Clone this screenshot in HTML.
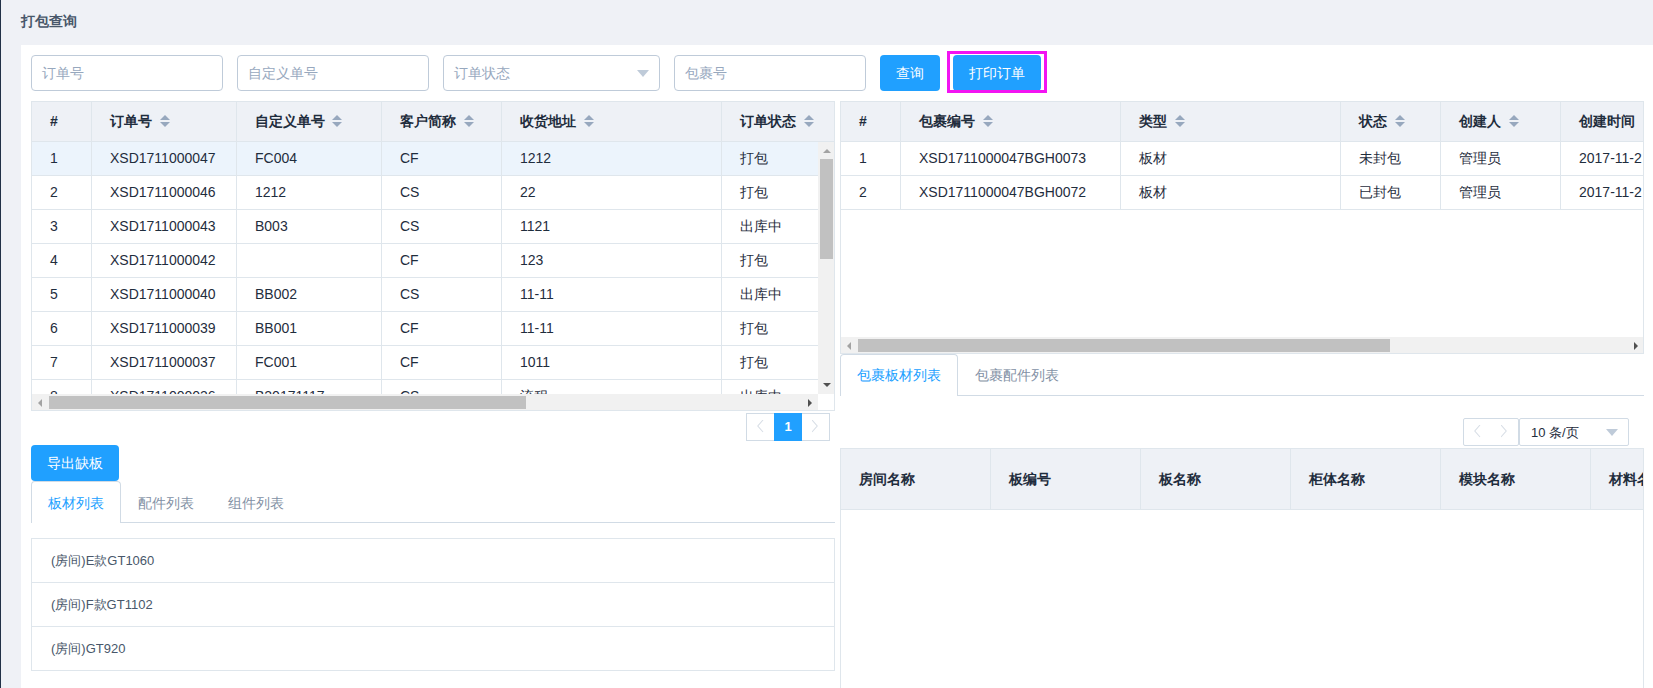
<!DOCTYPE html><html><head><meta charset="utf-8"><style>
*{box-sizing:border-box}
html,body{margin:0;padding:0}
body{width:1653px;height:688px;overflow:hidden;position:relative;background:#eff1f6;font-family:"Liberation Sans",sans-serif;font-size:14px;color:#1f2d3d}
.a{position:absolute}
.hl{position:absolute;height:1px;background:#dfe6ec}
.vl{position:absolute;width:1px;background:#dfe6ec}
.t{position:absolute;white-space:nowrap;line-height:16px}
.th{font-weight:bold}
.inp{position:absolute;top:55px;height:36px;border:1px solid #bfcbd9;border-radius:4px;background:#fff}
.ph{position:absolute;left:10px;top:0;line-height:34px;color:#97a8be;white-space:nowrap}
.btn{position:absolute;top:55px;height:36px;border-radius:4px;background:#20a0ff;color:#fff;text-align:center;line-height:36px}
.caret{position:absolute;width:0;height:0;border-left:5px solid transparent;border-right:5px solid transparent}
.up{border-bottom:5px solid #97a8be}
.dn{border-top:5px solid #97a8be}
</style></head><body>
<div class="a" style="left:0;top:0;width:1px;height:688px;background:#223147"></div>
<div class="t" style="left:21px;top:13px;font-weight:bold;color:#48576a;font-size:14px">打包查询</div>
<div class="a" style="left:21px;top:45px;width:1632px;height:643px;background:#fff"></div>
<div class="inp" style="left:31px;width:192px"><span class="ph">订单号</span></div>
<div class="inp" style="left:237px;width:192px"><span class="ph">自定义单号</span></div>
<div class="inp" style="left:443px;width:217px"><span class="ph">订单状态</span></div>
<div class="inp" style="left:674px;width:192px"><span class="ph">包裹号</span></div>
<div class="a" style="left:637px;top:70px;width:0;height:0;border-left:6px solid transparent;border-right:6px solid transparent;border-top:7px solid #bfcbd9"></div>
<div class="btn" style="left:880px;width:60px">查询</div>
<div class="btn" style="left:953px;width:88px">打印订单</div>
<div class="a" style="left:947px;top:51px;width:100px;height:42px;border:3px solid #f214f2"></div>
<div class="a" style="left:32px;top:102px;width:802px;height:39px;background:#eef1f6"></div>
<div class="t th" style="left:50px;top:113px">#</div>
<div class="t th" style="left:110px;top:113px">订单号</div>
<div class="caret up" style="left:160px;top:115px"></div>
<div class="caret dn" style="left:160px;top:122px"></div>
<div class="t th" style="left:255px;top:113px">自定义单号</div>
<div class="caret up" style="left:332px;top:115px"></div>
<div class="caret dn" style="left:332px;top:122px"></div>
<div class="t th" style="left:400px;top:113px">客户简称</div>
<div class="caret up" style="left:464px;top:115px"></div>
<div class="caret dn" style="left:464px;top:122px"></div>
<div class="t th" style="left:520px;top:113px">收货地址</div>
<div class="caret up" style="left:584px;top:115px"></div>
<div class="caret dn" style="left:584px;top:122px"></div>
<div class="t th" style="left:740px;top:113px">订单状态</div>
<div class="caret up" style="left:804px;top:115px"></div>
<div class="caret dn" style="left:804px;top:122px"></div>
<div class="vl" style="left:91px;top:102px;height:39px"></div>
<div class="vl" style="left:236px;top:102px;height:39px"></div>
<div class="vl" style="left:381px;top:102px;height:39px"></div>
<div class="vl" style="left:501px;top:102px;height:39px"></div>
<div class="vl" style="left:721px;top:102px;height:39px"></div>
<div class="hl" style="left:31px;top:141px;width:804px"></div>
<div class="a" style="left:32px;top:142px;width:786px;height:252px;overflow:hidden">
<div class="a" style="left:0;top:0;width:786px;height:33px;background:#ecf4fc"></div>
<div class="t" style="left:18px;top:8px">1</div>
<div class="t" style="left:78px;top:8px">XSD1711000047</div>
<div class="t" style="left:223px;top:8px">FC004</div>
<div class="t" style="left:368px;top:8px">CF</div>
<div class="t" style="left:488px;top:8px">1212</div>
<div class="t" style="left:708px;top:8px">打包</div>
<div class="hl" style="left:0;top:33px;width:786px"></div>
<div class="t" style="left:18px;top:42px">2</div>
<div class="t" style="left:78px;top:42px">XSD1711000046</div>
<div class="t" style="left:223px;top:42px">1212</div>
<div class="t" style="left:368px;top:42px">CS</div>
<div class="t" style="left:488px;top:42px">22</div>
<div class="t" style="left:708px;top:42px">打包</div>
<div class="hl" style="left:0;top:67px;width:786px"></div>
<div class="t" style="left:18px;top:76px">3</div>
<div class="t" style="left:78px;top:76px">XSD1711000043</div>
<div class="t" style="left:223px;top:76px">B003</div>
<div class="t" style="left:368px;top:76px">CS</div>
<div class="t" style="left:488px;top:76px">1121</div>
<div class="t" style="left:708px;top:76px">出库中</div>
<div class="hl" style="left:0;top:101px;width:786px"></div>
<div class="t" style="left:18px;top:110px">4</div>
<div class="t" style="left:78px;top:110px">XSD1711000042</div>
<div class="t" style="left:368px;top:110px">CF</div>
<div class="t" style="left:488px;top:110px">123</div>
<div class="t" style="left:708px;top:110px">打包</div>
<div class="hl" style="left:0;top:135px;width:786px"></div>
<div class="t" style="left:18px;top:144px">5</div>
<div class="t" style="left:78px;top:144px">XSD1711000040</div>
<div class="t" style="left:223px;top:144px">BB002</div>
<div class="t" style="left:368px;top:144px">CS</div>
<div class="t" style="left:488px;top:144px">11-11</div>
<div class="t" style="left:708px;top:144px">出库中</div>
<div class="hl" style="left:0;top:169px;width:786px"></div>
<div class="t" style="left:18px;top:178px">6</div>
<div class="t" style="left:78px;top:178px">XSD1711000039</div>
<div class="t" style="left:223px;top:178px">BB001</div>
<div class="t" style="left:368px;top:178px">CF</div>
<div class="t" style="left:488px;top:178px">11-11</div>
<div class="t" style="left:708px;top:178px">打包</div>
<div class="hl" style="left:0;top:203px;width:786px"></div>
<div class="t" style="left:18px;top:212px">7</div>
<div class="t" style="left:78px;top:212px">XSD1711000037</div>
<div class="t" style="left:223px;top:212px">FC001</div>
<div class="t" style="left:368px;top:212px">CF</div>
<div class="t" style="left:488px;top:212px">1011</div>
<div class="t" style="left:708px;top:212px">打包</div>
<div class="hl" style="left:0;top:237px;width:786px"></div>
<div class="t" style="left:18px;top:246px">8</div>
<div class="t" style="left:78px;top:246px">XSD1711000036</div>
<div class="t" style="left:223px;top:246px">B20171117</div>
<div class="t" style="left:368px;top:246px">CS</div>
<div class="t" style="left:488px;top:246px">流程</div>
<div class="t" style="left:708px;top:246px">出库中</div>
<div class="hl" style="left:0;top:271px;width:786px"></div>
<div class="vl" style="left:59px;top:0;height:252px"></div>
<div class="vl" style="left:204px;top:0;height:252px"></div>
<div class="vl" style="left:349px;top:0;height:252px"></div>
<div class="vl" style="left:469px;top:0;height:252px"></div>
<div class="vl" style="left:689px;top:0;height:252px"></div>
</div>
<div class="a" style="left:818px;top:142px;width:16px;height:252px;background:#f1f1f1"></div>
<div class="a" style="left:820px;top:159px;width:13px;height:100px;background:#c1c1c1"></div>
<div class="a" style="left:823px;top:149px;width:0;height:0;border-left:4px solid transparent;border-right:4px solid transparent;border-bottom:4px solid #a3a3a3"></div>
<div class="a" style="left:823px;top:383px;width:0;height:0;border-left:4px solid transparent;border-right:4px solid transparent;border-top:4px solid #505050"></div>
<div class="a" style="left:32px;top:394px;width:786px;height:16px;background:#f1f1f1"></div>
<div class="a" style="left:49px;top:396px;width:477px;height:13px;background:#c1c1c1"></div>
<div class="a" style="left:38px;top:399px;width:0;height:0;border-top:4px solid transparent;border-bottom:4px solid transparent;border-right:4px solid #a3a3a3"></div>
<div class="a" style="left:808px;top:399px;width:0;height:0;border-top:4px solid transparent;border-bottom:4px solid transparent;border-left:4px solid #505050"></div>
<div class="hl" style="left:31px;top:101px;width:804px"></div>
<div class="hl" style="left:31px;top:410px;width:804px"></div>
<div class="vl" style="left:31px;top:101px;height:310px"></div>
<div class="vl" style="left:834px;top:101px;height:310px"></div>
<div class="a" style="left:746px;top:413px;width:84px;height:28px;border:1px solid #d1dbe5;background:#fff"></div>
<div class="a" style="left:774px;top:413px;width:28px;height:28px;background:#20a0ff;color:#fff;font-weight:bold;font-size:13px;text-align:center;line-height:28px">1</div>
<div class="a" style="left:841px;top:102px;width:802px;height:39px;background:#eef1f6;overflow:hidden">
<div class="t th" style="left:18px;top:11px">#</div>
<div class="t th" style="left:78px;top:11px">包裹编号</div>
<div class="caret up" style="left:142px;top:13px"></div>
<div class="caret dn" style="left:142px;top:20px"></div>
<div class="t th" style="left:298px;top:11px">类型</div>
<div class="caret up" style="left:334px;top:13px"></div>
<div class="caret dn" style="left:334px;top:20px"></div>
<div class="t th" style="left:518px;top:11px">状态</div>
<div class="caret up" style="left:554px;top:13px"></div>
<div class="caret dn" style="left:554px;top:20px"></div>
<div class="t th" style="left:618px;top:11px">创建人</div>
<div class="caret up" style="left:668px;top:13px"></div>
<div class="caret dn" style="left:668px;top:20px"></div>
<div class="t th" style="left:738px;top:11px">创建时间</div>
<div class="caret up" style="left:802px;top:13px"></div>
<div class="caret dn" style="left:802px;top:20px"></div>
<div class="vl" style="left:59px;top:0;height:39px"></div>
<div class="vl" style="left:279px;top:0;height:39px"></div>
<div class="vl" style="left:499px;top:0;height:39px"></div>
<div class="vl" style="left:599px;top:0;height:39px"></div>
<div class="vl" style="left:719px;top:0;height:39px"></div>
<div class="vl" style="left:919px;top:0;height:39px"></div>
</div>
<div class="hl" style="left:840px;top:141px;width:804px"></div>
<div class="a" style="left:841px;top:142px;width:802px;height:195px;overflow:hidden">
<div class="t" style="left:18px;top:8px">1</div>
<div class="t" style="left:78px;top:8px">XSD1711000047BGH0073</div>
<div class="t" style="left:298px;top:8px">板材</div>
<div class="t" style="left:518px;top:8px">未封包</div>
<div class="t" style="left:618px;top:8px">管理员</div>
<div class="t" style="left:738px;top:8px">2017-11-2</div>
<div class="hl" style="left:0;top:33px;width:802px"></div>
<div class="vl" style="left:59px;top:0px;height:34px"></div>
<div class="vl" style="left:279px;top:0px;height:34px"></div>
<div class="vl" style="left:499px;top:0px;height:34px"></div>
<div class="vl" style="left:599px;top:0px;height:34px"></div>
<div class="vl" style="left:719px;top:0px;height:34px"></div>
<div class="vl" style="left:919px;top:0px;height:34px"></div>
<div class="t" style="left:18px;top:42px">2</div>
<div class="t" style="left:78px;top:42px">XSD1711000047BGH0072</div>
<div class="t" style="left:298px;top:42px">板材</div>
<div class="t" style="left:518px;top:42px">已封包</div>
<div class="t" style="left:618px;top:42px">管理员</div>
<div class="t" style="left:738px;top:42px">2017-11-2</div>
<div class="hl" style="left:0;top:67px;width:802px"></div>
<div class="vl" style="left:59px;top:34px;height:34px"></div>
<div class="vl" style="left:279px;top:34px;height:34px"></div>
<div class="vl" style="left:499px;top:34px;height:34px"></div>
<div class="vl" style="left:599px;top:34px;height:34px"></div>
<div class="vl" style="left:719px;top:34px;height:34px"></div>
<div class="vl" style="left:919px;top:34px;height:34px"></div>
</div>
<div class="a" style="left:841px;top:337px;width:802px;height:16px;background:#f1f1f1"></div>
<div class="a" style="left:858px;top:339px;width:532px;height:13px;background:#c1c1c1"></div>
<div class="a" style="left:847px;top:342px;width:0;height:0;border-top:4px solid transparent;border-bottom:4px solid transparent;border-right:4px solid #a3a3a3"></div>
<div class="a" style="left:1634px;top:342px;width:0;height:0;border-top:4px solid transparent;border-bottom:4px solid transparent;border-left:4px solid #505050"></div>
<div class="hl" style="left:840px;top:101px;width:804px"></div>
<div class="hl" style="left:840px;top:353px;width:804px"></div>
<div class="vl" style="left:840px;top:101px;height:253px"></div>
<div class="vl" style="left:1643px;top:101px;height:253px"></div>
<div class="a" style="left:840px;top:354px;width:118px;height:42px;border:1px solid #d1dbe5;border-bottom:none;border-radius:4px 4px 0 0;background:#fff"></div>
<div class="a" style="left:957px;top:395px;width:687px;height:1px;background:#d1dbe5"></div>
<div class="t" style="left:857px;top:367px;color:#20a0ff">包裹板材列表</div>
<div class="t" style="left:975px;top:367px;color:#8391a5">包裹配件列表</div>
<div class="a" style="left:1463px;top:418px;width:56px;height:28px;border:1px solid #d1dbe5;border-radius:2px;background:#fff"></div>
<div class="a" style="left:1519px;top:418px;width:110px;height:28px;border:1px solid #d1dbe5;border-radius:2px;background:#fff"></div>
<div class="t" style="left:1531px;top:425px;font-size:13px">10 条/页</div>
<div class="a" style="left:1606px;top:429px;width:0;height:0;border-left:6px solid transparent;border-right:6px solid transparent;border-top:7px solid #bfcbd9"></div>
<div class="a" style="left:841px;top:449px;width:802px;height:60px;background:#eef1f6;overflow:hidden">
<div class="t th" style="left:18px;top:22px">房间名称</div>
<div class="t th" style="left:168px;top:22px">板编号</div>
<div class="t th" style="left:318px;top:22px">板名称</div>
<div class="t th" style="left:468px;top:22px">柜体名称</div>
<div class="t th" style="left:618px;top:22px">模块名称</div>
<div class="t th" style="left:768px;top:22px">材料名称</div>
<div class="vl" style="left:149px;top:0;height:60px"></div>
<div class="vl" style="left:299px;top:0;height:60px"></div>
<div class="vl" style="left:449px;top:0;height:60px"></div>
<div class="vl" style="left:599px;top:0;height:60px"></div>
<div class="vl" style="left:749px;top:0;height:60px"></div>
<div class="vl" style="left:899px;top:0;height:60px"></div>
</div>
<div class="hl" style="left:840px;top:448px;width:804px"></div>
<div class="hl" style="left:840px;top:509px;width:804px"></div>
<div class="vl" style="left:840px;top:448px;height:240px"></div>
<div class="vl" style="left:1643px;top:448px;height:240px"></div>
<div class="btn" style="left:31px;top:445px;width:88px">导出缺板</div>
<div class="a" style="left:31px;top:481px;width:90px;height:42px;border:1px solid #d1dbe5;border-bottom:none;border-radius:4px 4px 0 0;background:#fff"></div>
<div class="a" style="left:120px;top:522px;width:715px;height:1px;background:#d1dbe5"></div>
<div class="t" style="left:48px;top:495px;color:#20a0ff">板材列表</div>
<div class="t" style="left:138px;top:495px;color:#8391a5">配件列表</div>
<div class="t" style="left:228px;top:495px;color:#8391a5">组件列表</div>
<div class="a" style="left:31px;top:538px;width:804px;height:133px;border:1px solid #dfe6ec"></div>
<div class="t" style="left:51px;top:553px;font-size:13px;color:#48576a">(房间)E款GT1060</div>
<div class="hl" style="left:31px;top:582px;width:804px"></div>
<div class="t" style="left:51px;top:597px;font-size:13px;color:#48576a">(房间)F款GT1102</div>
<div class="hl" style="left:31px;top:626px;width:804px"></div>
<div class="t" style="left:51px;top:641px;font-size:13px;color:#48576a">(房间)GT920</div>
<svg class="a" style="left:757px;top:420px" width="7" height="13" viewBox="0 0 7 13"><path d="M6 0 L0.8 6 L6 12" fill="none" stroke="#d8dee6" stroke-width="1.1"/></svg>
<svg class="a" style="left:812px;top:420px" width="7" height="13" viewBox="0 0 7 13"><path d="M0 0 L5.2 6 L0 12" fill="none" stroke="#d8dee6" stroke-width="1.1"/></svg>
<svg class="a" style="left:1474px;top:425px" width="7" height="13" viewBox="0 0 7 13"><path d="M6 0 L0.8 6 L6 12" fill="none" stroke="#d8dee6" stroke-width="1.1"/></svg>
<svg class="a" style="left:1501px;top:425px" width="7" height="13" viewBox="0 0 7 13"><path d="M0 0 L5.2 6 L0 12" fill="none" stroke="#d8dee6" stroke-width="1.1"/></svg>
</body></html>
